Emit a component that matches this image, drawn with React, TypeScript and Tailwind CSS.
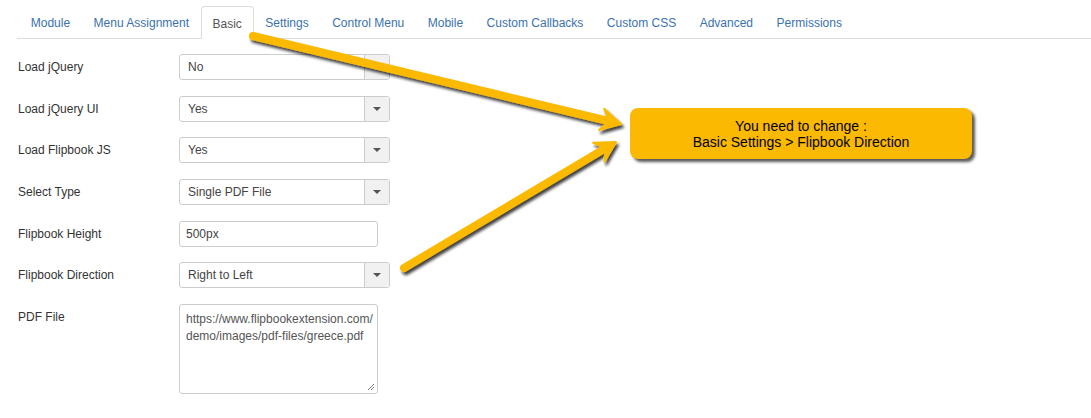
import React from 'react';

const tabs = ['Module', 'Menu Assignment', 'Basic', 'Settings', 'Control Menu', 'Mobile', 'Custom Callbacks', 'Custom CSS', 'Advanced', 'Permissions'];

type Row = { label: string; kind: 'select' | 'input' | 'textarea'; value: string };

const rows: Row[] = [
  { label: 'Load jQuery', kind: 'select', value: 'No' },
  { label: 'Load jQuery UI', kind: 'select', value: 'Yes' },
  { label: 'Load Flipbook JS', kind: 'select', value: 'Yes' },
  { label: 'Select Type', kind: 'select', value: 'Single PDF File' },
  { label: 'Flipbook Height', kind: 'input', value: '500px' },
  { label: 'Flipbook Direction', kind: 'select', value: 'Right to Left' },
  { label: 'PDF File', kind: 'textarea', value: 'https://www.flipbookextension.com/\ndemo/images/pdf-files/greece.pdf' },
];

function Field({ row }: { row: Row }) {
  if (row.kind === 'select') {
    return (
      <div className="flex h-[26px] w-[211px] overflow-hidden rounded-[3px] border border-[#ccc] bg-white">
        <div className="flex flex-1 items-center pl-2 text-[#444]">{row.value}</div>
        <div className="flex w-[25px] items-center justify-center border-l border-[#ccc] bg-[#f1f1f1]">
          <div className="h-0 w-0 border-x-[4px] border-t-[4px] border-x-transparent border-t-[#555]" />
        </div>
      </div>
    );
  }
  if (row.kind === 'input') {
    return (
      <div className="flex h-[26px] w-[199px] items-center rounded-[3px] border border-[#ccc] pl-[6px] text-[#444]">
        {row.value}
      </div>
    );
  }
  return (
    <div className="relative h-[90px] w-[199px] whitespace-pre rounded-[3px] border border-[#ccc] px-[6px] pt-[6px] leading-[17px] text-[#555]">
      {row.value}
      <svg className="absolute bottom-[2px] right-[2px]" width="8" height="8" viewBox="0 0 8 8">
        <path d="M7 1 L1 7 M7 4 L4 7" stroke="#777" strokeWidth="1" />
      </svg>
    </div>
  );
}

function arrowParts(x1: number, y1: number, x2: number, y2: number) {
  const dx = x2 - x1;
  const dy = y2 - y1;
  const len = Math.hypot(dx, dy);
  const ux = dx / len;
  const uy = dy / len;
  const px = -uy;
  const py = ux;
  const L = 20;
  const W = 11;
  const bx = x2 - ux * L;
  const by = y2 - uy * L;
  const nx = x2 - ux * L * 0.6;
  const ny = y2 - uy * L * 0.6;
  const head = [
    `${x2},${y2}`,
    `${bx + px * W},${by + py * W}`,
    `${nx},${ny}`,
    `${bx - px * W},${by - py * W}`,
  ].join(' ');
  return { lineEnd: [x2 - ux * 14, y2 - uy * 14], head };
}

function Arrow({ x1, y1, x2, y2 }: { x1: number; y1: number; x2: number; y2: number }) {
  const a = arrowParts(x1, y1, x2, y2);
  return (
    <g filter="url(#sh)">
      <line x1={x1} y1={y1} x2={a.lineEnd[0]} y2={a.lineEnd[1]} stroke="#fbb901" strokeWidth="8" strokeLinecap="round" />
      <polygon points={a.head} fill="#fbb901" stroke="#fbb901" strokeWidth="2" strokeLinejoin="round" />
    </g>
  );
}

export default function App() {
  return (
    <div className="relative h-[418px] w-[1091px] overflow-hidden bg-white text-[12px] leading-[14px] text-[#333]" style={{ fontFamily: '"Liberation Sans", Arial, sans-serif' }}>
      <div className="ml-[17px] flex h-[39px] items-end border-b border-[#ddd] pl-[2px]">
        {tabs.map((t) => (
          <div
            key={t}
            className={
              t === 'Basic'
                ? 'mb-[-1px] rounded-t-[4px] border border-b-white border-[#ddd] bg-white px-[10.75px] pb-[7px] pt-[10px] text-[#555]'
                : 'border border-transparent px-[10.75px] pb-[7px] pt-[10px] text-[#3a72b0]'
            }
          >
            {t}
          </div>
        ))}
      </div>

      <div className="mt-[15px] flex flex-col gap-[15.7px] pl-[18px]">
        {rows.map((r) => (
          <div key={r.label} className="flex items-start">
            <div className="w-[161px] pt-[6px]">{r.label}</div>
            <Field row={r} />
          </div>
        ))}
      </div>

      <div className="absolute left-[630px] top-[108px] flex h-[51px] w-[342px] flex-col items-center justify-center rounded-[8px] bg-[#fbb901] text-[14px] leading-[16px] text-black shadow-[3px_3px_3px_rgba(0,0,0,0.65)]">
        <div>You need to change :</div>
        <div>Basic Settings &gt; Flipbook Direction</div>
      </div>

      <svg className="pointer-events-none absolute left-0 top-0" width="1091" height="418">
        <defs>
          <filter id="sh" x="-10%" y="-10%" width="120%" height="130%">
            <feDropShadow dx="2" dy="3" stdDeviation="1.6" floodColor="#000" floodOpacity="0.75" />
          </filter>
        </defs>
        <Arrow x1={253} y1={36} x2={621} y2={124} />
        <Arrow x1={404} y1={268} x2={616} y2={142} />
      </svg>
    </div>
  );
}
